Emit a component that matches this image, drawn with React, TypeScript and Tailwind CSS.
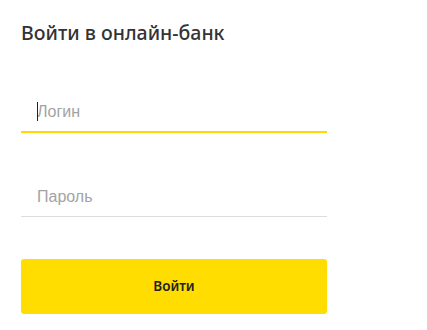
export default function App() {
    return (
        <div className="min-h-[330px] w-[427px] bg-white px-[21px] pt-[19px]" style={{ fontFamily: '"Liberation Sans", Arial, sans-serif' }}>
            <h1 className="text-[19.5px] leading-[28px] font-medium text-[#333333]" style={{ fontFamily: '"Noto Sans", "DejaVu Sans", sans-serif' }}>
                Войти в онлайн-банк
            </h1>

            <div className="mt-[40px] w-[306px]">
                <div className="relative h-[44px] flex items-center pl-4 pt-[6px]">
                    <span className="absolute left-[16px] top-[15px] h-[19px] w-px bg-[#222]" />
                    <span className="text-[16px] text-[#a3a3a3]">Логин</span>
                </div>
                <div className="h-[1.5px] bg-[#ffd900]" />

                <div className="mt-[39.5px] relative h-[44px] flex items-center pl-4 pt-[6px]">
                    <span className="text-[16px] text-[#a3a3a3]">Пароль</span>
                </div>
                <div className="h-px bg-[#dddddd]" />

                <button className="mt-[42px] w-full h-[55px] rounded-[3px] bg-[#ffdd00] text-[13.5px] font-semibold text-[#222]" style={{ fontFamily: '"Noto Sans", "DejaVu Sans", sans-serif' }}>
                    Войти
                </button>
            </div>
        </div>
    );
}
